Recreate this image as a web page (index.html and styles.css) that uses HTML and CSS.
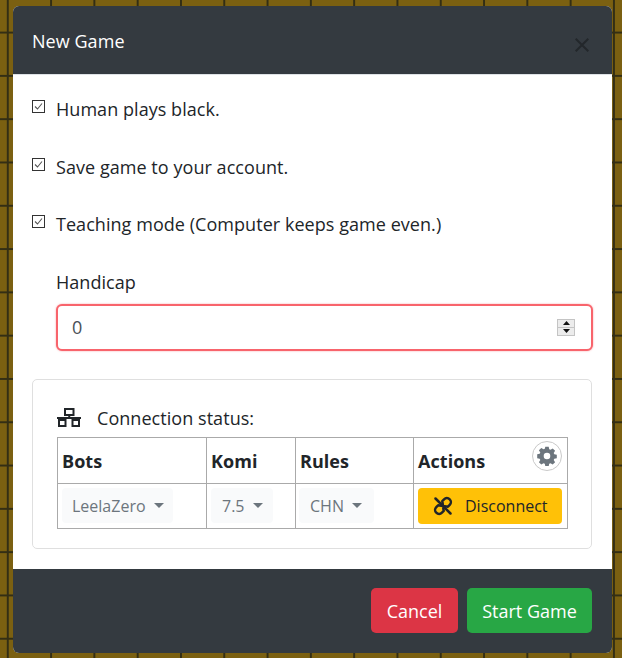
FILE: index.html
```html
<!DOCTYPE html>
<html lang="en">
<head>
<meta charset="utf-8">
<title>New Game</title>
<link rel="stylesheet" href="styles.css">
</head>
<body>
<div class="modal">
  <header class="modal-header">
    <h5 class="modal-title">New Game</h5>
    <span class="close-x"><svg width="14" height="14" viewBox="0 0 14 14"><path d="M.7.7 13.300 13.300M13.300.7.700 13.300" stroke="#23272b" stroke-width="2" fill="none"/></svg></span>
  </header>
  <div class="modal-body">
    <label class="check-row">
      <svg class="check" width="13" height="13" viewBox="0 0 13 13"><rect x=".5" y=".5" width="12" height="12" fill="#fff" stroke="#333"/><path d="M3 6.500 5.500 9 10 3.500" fill="none" stroke="#555" stroke-width="1.100"/></svg>
      <span>Human plays black.</span>
    </label>
    <label class="check-row">
      <svg class="check" width="13" height="13" viewBox="0 0 13 13"><rect x=".5" y=".5" width="12" height="12" fill="#fff" stroke="#333"/><path d="M3 6.500 5.500 9 10 3.500" fill="none" stroke="#555" stroke-width="1.100"/></svg>
      <span>Save game to your account.</span>
    </label>
    <label class="check-row">
      <svg class="check" width="13" height="13" viewBox="0 0 13 13"><rect x=".5" y=".5" width="12" height="12" fill="#fff" stroke="#333"/><path d="M3 6.500 5.500 9 10 3.500" fill="none" stroke="#555" stroke-width="1.100"/></svg>
      <span>Teaching mode (Computer keeps game even.)</span>
    </label>
    <div class="handicap">
      <label class="field-label" for="handicap">Handicap</label>
      <div class="input-wrap">
        <input id="handicap" class="field" type="text" value="0">
        <span class="spinner">
          <span class="spin-part"><svg width="7" height="4" viewBox="0 0 7 4"><path d="M3.500 0 7 4H0z" fill="#111"/></svg></span>
          <span class="spin-part"><svg width="7" height="4" viewBox="0 0 7 4"><path d="M0 0H7L3.500 4z" fill="#111"/></svg></span>
        </span>
      </div>
    </div>
    <section class="card">
      <div class="status">
        <svg width="24" height="19" viewBox="0 0 24 19"><g fill="none" stroke="#212529" stroke-width="2"><rect x="8" y="1" width="8.500" height="6"/><path d="M12.250 7v3M0 10H24M5 10v2M19 10v2"/><rect x="2" y="12" width="6.500" height="6"/><rect x="15.500" y="12" width="6.500" height="6"/></g></svg>
        <span>Connection status:</span>
      </div>
      <table class="bots">
        <thead>
          <tr><th class="c1">Bots</th><th class="c2">Komi</th><th class="c3">Rules</th><th class="c4">Actions</th></tr>
        </thead>
        <tbody>
          <tr>
            <td><span class="dd dd-bots">LeelaZero<i class="caret"></i></span></td>
            <td><span class="dd dd-komi">7.5<i class="caret"></i></span></td>
            <td><span class="dd dd-rules">CHN<i class="caret"></i></span></td>
            <td><button class="btn-warning" type="button">
              <svg width="20" height="20" viewBox="0 0 20 20"><g fill="none" stroke="#212529" stroke-width="2.500" stroke-linecap="round" stroke-linejoin="round"><path d="M2.500 2.500 17.500 17.500"/><path transform="rotate(-45 10 10)" d="M7 6H4.500a4 4 0 0 0 0 8H7L13 6h2.500a4 4 0 0 1 0 8H13L7 6z"/></g></svg>
              <span>Disconnect</span>
            </button></td>
          </tr>
        </tbody>
      </table>
      <span class="gear"><svg width="20" height="20" viewBox="0 0 20 20"><path fill="#6c757d" fill-rule="evenodd" d="M8.300 1h3.400l.5 2.500 1.300.6 2.200-1.400 2.400 2.400-1.400 2.200.6 1.300 2.500.5v3.400l-2.500.5-.6 1.300 1.400 2.200-2.400 2.400-2.200-1.400-1.300.6-.5 2.500H8.300l-.5-2.500-1.300-.6-2.200 1.400-2.400-2.400 1.400-2.200-.6-1.300-2.500-.5V8.600l2.500-.5.6-1.300-1.400-2.200 2.400-2.400 2.200 1.400 1.300-.6zM10 7a3.300 3.300 0 1 0 0 6.600A3.300 3.300 0 0 0 10 7z" transform="translate(0 -.3)"/></svg></span>
    </section>
  </div>
  <footer class="modal-footer">
    <button class="btn btn-danger" type="button">Cancel</button>
    <button class="btn btn-success" type="button">Start Game</button>
  </footer>
</div>
</body>
</html>
```
FILE: styles.css
```css
* { box-sizing: border-box; }
html, body { height: 100%; }
body {
  margin: 0;
  overflow: hidden;
  padding: 6px 10px 5px 13px;
  font-family: "Open Sans", "Noto Sans", sans-serif;
  font-size: 18px;
  letter-spacing: .05px;
  color: #212529;
  background-color: #7b6011;
  background-image:
    linear-gradient(to right, #332e14 1.5px, transparent 1.5px),
    linear-gradient(to bottom, #332e14 1.5px, transparent 1.5px);
  background-size: 43.3px 43.3px;
  background-position: 6.8px 31.6px;
}
.modal {
  width: 599px;
  height: 647px;
  display: flex;
  flex-direction: column;
  border-radius: 6px;
  overflow: hidden;
  background: #fff;
}
.modal-header {
  height: 69px;
  flex: none;
  background: #343a40;
  color: #fff;
  display: flex;
  justify-content: space-between;
  padding: 0 23px 0 19px;
  border-bottom: 1px solid #dee2e6;
}
.modal-title {
  margin: 24px 0 0;
  font-size: 18px;
  font-weight: 400;
  line-height: 23px;
}
.close-x { margin-top: 32px; height: 14px; }
.close-x svg { display: block; }
.modal-body {
  flex: 1;
  padding: 0 19px;
}
.check-row {
  display: flex;
  align-items: flex-start;
  gap: 11px;
  height: 57.5px;
  line-height: 22px;
}
.check-row:first-child { margin-top: 23px; }
.check { flex: none; margin-top: 2px; }
.handicap { padding-left: 24px; }
.field-label { display: block; line-height: 22px; padding-bottom: 2px; }
.input-wrap { position: relative; margin-top: 9px; }
.field {
  display: block;
  width: 537px;
  height: 47px;
  border: 2px solid #f8646c;
  border-radius: 6px;
  padding: 0 14px;
  font: inherit;
  color: #495057;
  background: #fff;
  box-shadow: 0 0 2px #f8a0a5;
}
.spinner {
  position: absolute;
  left: 501px;
  top: 15px;
  width: 18px;
  height: 17px;
  display: flex;
  flex-direction: column;
  border: 1px solid #c4c4c4;
  background: #ececec;
}
.spin-part {
  flex: 1;
  display: flex;
  align-items: center;
  justify-content: center;
}
.spin-part + .spin-part { border-top: 1px solid #c4c4c4; }
.spin-part svg { display: block; }
.card {
  position: relative;
  margin-top: 28px;
  width: 560px;
  height: 170px;
  border: 1px solid #dfdfdf;
  border-radius: 5px;
  padding: 24px 24px 0;
}
.status {
  display: flex;
  align-items: center;
  gap: 16px;
  height: 33px;
  padding-bottom: 5px;
  line-height: 24px;
}
.status svg { flex: none; }
.bots {
  border-collapse: collapse;
  table-layout: fixed;
  width: 510px;
}
.bots th, .bots td {
  border: 1px solid #aaa;
  padding: 0 4px;
  text-align: left;
  vertical-align: middle;
}
.bots th { height: 46px; font-weight: 700; padding-top: 2px; }
.bots td { height: 45px; }
.c1 { width: 149px; }
.c2 { width: 89px; }
.c3 { width: 118px; }
.c4 { width: 154px; }
.dd {
  display: flex;
  align-items: center;
  height: 35px;
  padding: 0 10px;
  border-radius: 4px;
  background: #f9fafb;
  color: #6c757d;
  font-size: 16px;
  letter-spacing: 0;
}
.dd-bots { width: 111px; }
.dd-komi { width: 62px; padding: 0 11px; }
.dd-rules { width: 75px; margin-left: -1px; padding: 0 11px; }
.caret {
  margin-left: 8px;
  width: 0;
  height: 0;
  border-left: 5px solid transparent;
  border-right: 5px solid transparent;
  border-top: 5px solid #6c757d;
}
.btn-warning {
  display: flex;
  align-items: center;
  gap: 12px;
  width: 144px;
  height: 36px;
  padding: 0 15px;
  border: 0;
  border-radius: 4px;
  background: #ffc107;
  color: #212529;
  font: inherit;
  font-size: 16px;
  letter-spacing: 0;
}
.btn-warning svg { flex: none; }
.gear {
  position: absolute;
  left: 499px;
  top: 61px;
  width: 30px;
  height: 30px;
  display: flex;
  align-items: center;
  justify-content: center;
  border: 1px solid #c9c9c9;
  border-radius: 50%;
  background: #fff;
}
.gear svg { display: block; }
.modal-footer {
  flex: none;
  height: 84px;
  background: #343a40;
  display: flex;
  justify-content: flex-end;
  gap: 9px;
  padding: 19px 20px 0 0;
}
.btn {
  height: 45px;
  border: 0;
  border-radius: 5px;
  color: #fff;
  font: inherit;
}
.btn-danger { width: 87px; background: #dc3545; }
.btn-success { width: 125px; background: #28a745; }
```
